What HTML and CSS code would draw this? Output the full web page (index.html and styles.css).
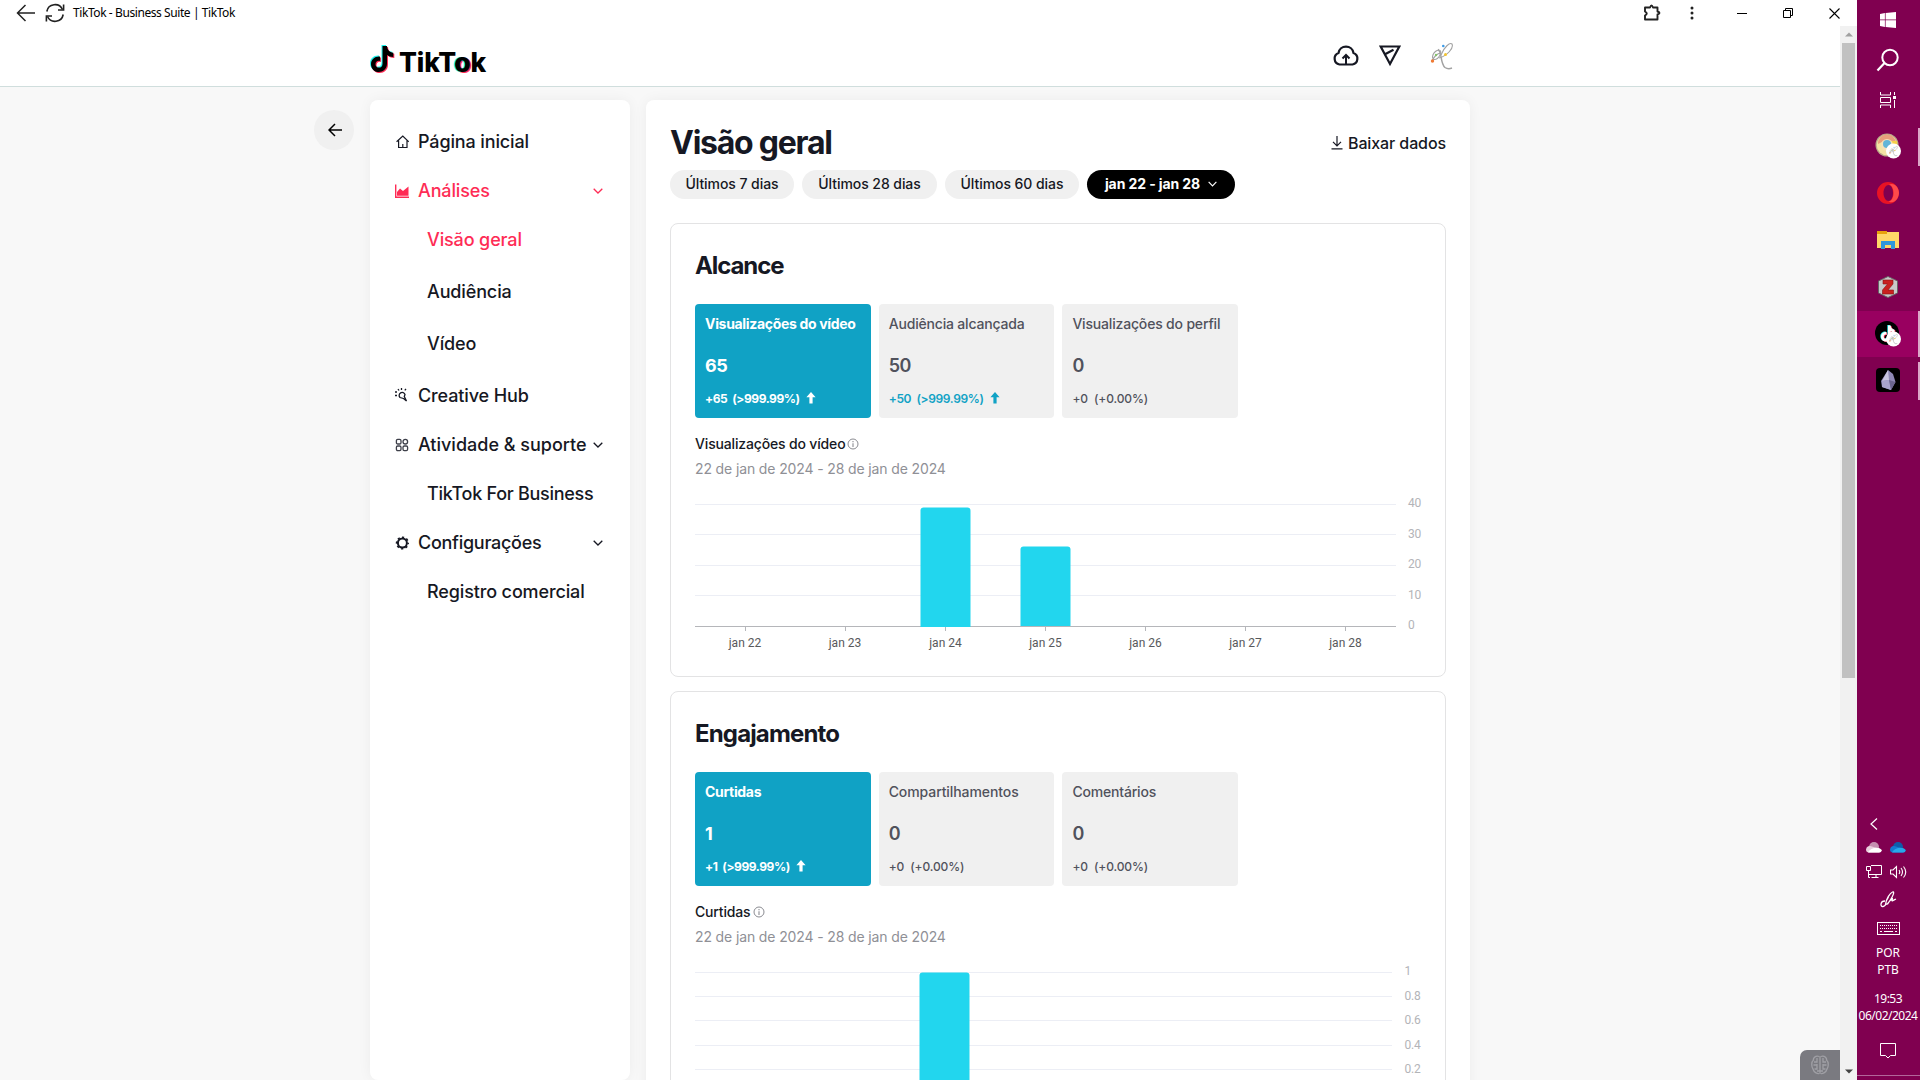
FILE: index.html
```html
<!DOCTYPE html>
<html lang="pt-BR">
<head>
<meta charset="utf-8">
<title>TikTok - Business Suite | TikTok</title>
<link rel="stylesheet" href="styles.css">
</head>
<body>
<svg width="0" height="0" class="defs">
  <defs>
    <symbol id="chev" viewBox="0 0 10 6"><path d="M.7 .7 5 5 9.3 .7" fill="none" stroke="currentColor" stroke-width="1.3"/></symbol>
    <symbol id="up" viewBox="0 0 10 12"><path d="M5 0 9.6 5.2H6.6V11.5H3.4V5.2H.4Z" fill="currentColor"/></symbol>
    <symbol id="info" viewBox="0 0 12 12"><circle cx="6" cy="6" r="5" fill="none" stroke="currentColor" stroke-width="1"/><path d="M6 5.2V9M6 3v1.2" stroke="currentColor" stroke-width="1.1"/></symbol>
    <symbol id="note" viewBox="0 0 24 28"><path d="M12.5 1H17C17.3 5 19.5 7.300 23.300 7.700V12C20.700 12 18.700 11.200 17 10V18.500C17 24 13 27 8.800 27 4 27 1 23.500 1 19.200 1 14.200 5 11 10 11.500V16C7.300 15.300 5.500 17 5.500 19.200 5.500 21.300 7 22.600 8.800 22.600 11 22.600 12.500 21.200 12.500 18.700Z"/></symbol>
    <symbol id="signature" viewBox="0 0 24 28"><g fill="none" stroke="#a2a2a2" stroke-width="1.100"><path d="M8 7.500C12 9 10 21 15 25.500Q18 27.500 22 26" stroke-width="1.500"/><path d="M11 13C14 5 20 0 22 2 24 6 17 14 9 16"/><path d="M9 8C3 9 1 16 4 17.500 9 18 12 10 10 8.500M1.500 20C3 16 7 11 11 11"/></g><circle cx="13.300" cy="4" r="1.300" fill="#3c9be8"/><circle cx="15.500" cy="12.500" r="1.500" fill="#f4c430"/><circle cx="2.500" cy="19" r="1.700" fill="#ef7a35"/><circle cx="6" cy="13" r="1.200" fill="#86c46a"/></symbol>
  </defs>
</svg>
<div class="desktop">
  <div class="window">
    <div class="titlebar">
      <svg class="t-back" width="20" height="18" viewBox="0 0 20 18"><path d="M19 9H2M9.500 1 1.500 9l8 8" fill="none" stroke="#222" stroke-width="1.500"/></svg>
      <svg class="t-reload" width="20" height="20" viewBox="0 0 20 20"><g fill="none" stroke="#222" stroke-width="1.600"><path d="M1.800 8.500A8.300 8.300 0 0 1 17.500 6.500"/><path d="M18.200 11.500A8.300 8.300 0 0 1 2.500 13.500"/><path d="M18.600 1.500V7H13M1.400 18.500V13H7"/></g></svg>
      <span class="t-title">TikTok - Business Suite | TikTok</span>
      <div class="t-right">
        <svg width="18" height="18" viewBox="0 0 18 18"><path d="M2 3.500H7Q8.500 -.5 10 3.500H14.500V7.500Q18.500 9 14.500 10.500V15.500H2V11.500Q5.500 9.500 2 7.500Z" fill="none" stroke="#222" stroke-width="1.900" stroke-linejoin="round"/></svg>
        <svg width="4" height="14" viewBox="0 0 4 14"><g fill="#222"><circle cx="2" cy="2" r="1.500"/><circle cx="2" cy="7" r="1.500"/><circle cx="2" cy="12" r="1.500"/></g></svg>
        <svg width="10" height="10" viewBox="0 0 10 10"><path d="M0 5.500H10" stroke="#000"/></svg>
        <svg width="10" height="10" viewBox="0 0 10 10"><path d="M.5 2.500H7.500V9.500H.5ZM2.500 2.500V.5H9.500V7.500H7.500" fill="none" stroke="#000"/></svg>
        <svg width="11" height="11" viewBox="0 0 11 11"><path d="M.5 .5 10.500 10.500M10.500 .5 .5 10.500" stroke="#000" stroke-width="1.100"/></svg>
      </div>
    </div>
    <div class="viewport">
      <div class="page">
        <header class="header">
          <div class="logo">
            <svg width="26" height="30" viewBox="0 0 26 30"><use href="#note" width="24" height="28" x="0" y="0" fill="#25f4ee"/><use href="#note" width="24" height="28" x="2" y="2" fill="#fe2c55"/><use href="#note" width="24" height="28" x="1" y="1" fill="#000"/></svg>
            <span class="wordmark">TikT<span class="o">o</span>k</span>
          </div>
          <div class="header-icons">
            <svg width="28" height="24" viewBox="0 0 28 24"><path d="M7.500 20.500A6 6 0 0 1 6.500 9 7.600 7.600 0 0 1 21.500 9 6 6 0 0 1 20.500 20.500Z" fill="none" stroke="#161823" stroke-width="2.200"/><path d="M14 20V12M10.500 14.500 14 11l3.500 3.500" fill="none" stroke="#161823" stroke-width="2"/></svg>
            <svg width="22" height="24" viewBox="0 0 22 24"><path d="M1.700 2.500H20.300L11 20ZM6.500 10 14.500 5.800" fill="none" stroke="#161823" stroke-width="2.200"/></svg>
            <svg width="24" height="28"><use href="#signature"/></svg>
          </div>
        </header>
        <div class="content">
          <button class="back"><svg width="14" height="14" viewBox="0 0 14 14"><path d="M14 7H1.500M7 1 1 7l6 6" fill="none" stroke="#000" stroke-width="1.500"/></svg></button>
          <nav class="sidebar">
            <a class="item"><svg width="14" height="14" viewBox="0 0 14 14"><path d="M1.600 6.800 7.800 1l6 5.800M3.600 5.500V12.500H12V5.500M7.800 9v3.500" fill="none" stroke="#161823" stroke-width="1.200"/></svg><span>Página inicial</span></a>
            <a class="item active"><svg width="14" height="14" viewBox="0 0 14 14"><path d="M.7 .5V13.200H14" fill="none" stroke="currentColor" stroke-width="1.400"/><path d="M2 11.700V8L5 4.500 8 7l5.500-4.500V11.700Z" fill="currentColor"/></svg><span>Análises</span><svg class="chev" width="10" height="6"><use href="#chev"/></svg></a>
            <a class="sub active"><span>Visão geral</span></a>
            <a class="sub tall"><span>Audiência</span></a>
            <a class="sub tall"><span>Vídeo</span></a>
            <a class="item creative"><svg width="14" height="14" viewBox="0 0 14 14"><g fill="none" stroke="#161823" stroke-width="1.300"><path d="M5 9.500A3 3 0 1 1 10 6.500L9.300 8.500 11.500 13 8.500 10.500Z"/><path d="M0 4h2M0 7.500h2M3 1l1 1.500M6.500 0v2M11 .8l-1.200 1.500"/></g></svg><span>Creative Hub</span></a>
            <a class="item"><svg width="14" height="14" viewBox="0 0 14 14"><g fill="none" stroke="#3d3f49" stroke-width="1.300"><rect x="1.400" y="1.400" width="4.600" height="4.600" rx="1.300"/><rect x="8" y="1.400" width="4.600" height="4.600" rx="2.300"/><rect x="1.400" y="8" width="4.600" height="4.600" rx="1.300"/><rect x="8" y="8" width="4.600" height="4.600" rx="1.300"/></g></svg><span class="wide">Atividade &amp; suporte</span><svg class="chev" width="10" height="6"><use href="#chev"/></svg></a>
            <a class="sub"><span class="tight">TikTok For Business</span></a>
            <a class="item"><svg width="14" height="14" viewBox="0 0 14 14"><circle cx="7.400" cy="7" r="4.500" fill="none" stroke="#161823" stroke-width="2"/><circle cx="7.400" cy="7" r="5.800" fill="none" stroke="#161823" stroke-width="1.600" stroke-dasharray="2.200 2.355" stroke-dashoffset="1.100"/></svg><span class="conf">Configurações</span><svg class="chev" width="10" height="6"><use href="#chev"/></svg></a>
            <a class="sub"><span>Registro comercial</span></a>
          </nav>
          <main class="main">
            <div class="main-head">
              <h1>Visão geral</h1>
              <a class="download"><svg width="12" height="14" viewBox="0 0 12 14"><path d="M6 0V9.500M2 5.800 6 9.800l4-4M.5 12.800H11.500" fill="none" stroke="#161823" stroke-width="1.200"/></svg><span>Baixar dados</span></a>
            </div>
            <div class="pills">
              <span class="pill p1">Últimos 7 dias</span><span class="pill p2">Últimos 28 dias</span><span class="pill p3">Últimos 60 dias</span><span class="pill on p4">jan 22 - jan 28 <svg width="9" height="6"><use href="#chev"/></svg></span>
            </div>
            <section class="card">
              <h2 class="reach">Alcance</h2>
              <div class="metrics">
                <div class="metric on"><b>Visualizações do vídeo</b><strong>65</strong><small>+65 &nbsp;(&gt;999.99%)<svg width="10" height="12"><use href="#up"/></svg></small></div>
                <div class="metric up"><b>Audiência alcançada</b><strong>50</strong><small>+50 &nbsp;(&gt;999.99%)<svg width="10" height="12"><use href="#up"/></svg></small></div>
                <div class="metric"><b>Visualizações do perfil</b><strong>0</strong><small>+0 &nbsp;(+0.00%)</small></div>
              </div>
              <h3>Visualizações do vídeo<svg width="12" height="12"><use href="#info"/></svg></h3>
              <p class="dates">22 de jan de 2024 - 28 de jan de 2024</p>
              <svg class="chart" width="750" height="170" viewBox="0 0 750 170">
                <g class="grid"><path d="M0 19.500H701M0 49.500H701M0 80.500H701M0 110.500H701"/></g>
                <path class="axis" d="M0 141.500H701"/>
                <path class="bar" d="M225.500 142V25.500a3 3 0 0 1 3-3h44a3 3 0 0 1 3 3V142Z"/>
                <path class="bar" d="M325.500 141V64.500a3 3 0 0 1 3-3h44a3 3 0 0 1 3 3V141Z"/>
                <path class="axis" d="M50.500 142v4M150.500 142v4M250.500 142v4M350.500 142v4M450.500 142v4M550.500 142v4M650.500 142v4"/>
                <g class="xl"><text x="50" y="162">jan 22</text><text x="150" y="162">jan 23</text><text x="250.500" y="162">jan 24</text><text x="350.500" y="162">jan 25</text><text x="450.500" y="162">jan 26</text><text x="550.500" y="162">jan 27</text><text x="650.500" y="162">jan 28</text></g>
                <g class="yl"><text x="713" y="22">40</text><text x="713" y="53">30</text><text x="713" y="83">20</text><text x="713" y="114">10</text><text x="713" y="144">0</text></g>
              </svg>
            </section>
            <section class="card">
              <h2>Engajamento</h2>
              <div class="metrics">
                <div class="metric on"><b>Curtidas</b><strong>1</strong><small>+1 &nbsp;(&gt;999.99%)<svg width="10" height="12"><use href="#up"/></svg></small></div>
                <div class="metric"><b class="shares">Compartilhamentos</b><strong>0</strong><small>+0 &nbsp;(+0.00%)</small></div>
                <div class="metric"><b>Comentários</b><strong>0</strong><small>+0 &nbsp;(+0.00%)</small></div>
              </div>
              <h3>Curtidas<svg width="12" height="12"><use href="#info"/></svg></h3>
              <p class="dates">22 de jan de 2024 - 28 de jan de 2024</p>
              <svg class="chart" width="750" height="170" viewBox="0 0 750 170">
                <g class="grid"><path d="M0 19.500H697M0 43.500H697M0 67.500H697M0 92.500H697M0 116.500H697"/></g>
                <path class="bar" d="M224.500 141V22.500a3 3 0 0 1 3-3h44a3 3 0 0 1 3 3V141Z"/>
                <path class="axis" d="M0 141.500H697"/>
                <g class="yl"><text x="709.500" y="22">1</text><text x="709.500" y="47">0.8</text><text x="709.500" y="71">0.6</text><text x="709.500" y="96">0.4</text><text x="709.500" y="120">0.2</text></g>
              </svg>
            </section>
          </main>
        </div>
        <div class="brain"><svg width="18" height="20" viewBox="0 0 18 20"><g fill="none" stroke="#a0a0a5" stroke-width="1.300"><path d="M9 1V19M8 1.500C4 0 2 4 2.500 5 0 7 .5 12 2 14 3 18 7 19 8 18.500M10 1.500c4-1.500 6 2.500 5.500 3.500 2.500 2 2 7 .5 9-1 4-5 5-6 4.500"/><path d="M6 3v4H3M6 10H2.500M6 9v5H3.500M12 3v4h3M12 10h3.500M12 9v5h2.500M6 16h6"/></g></svg></div>
      </div>
      <div class="scroll"><svg width="8" height="5" viewBox="0 0 8 5"><path d="M0 4.500 4 .5 8 4.500Z" fill="#a0a0a0"/></svg><i class="thumb"></i><svg class="down" width="8" height="5" viewBox="0 0 8 5"><path d="M0 .5H8L4 4.500Z" fill="#444"/></svg></div>
    </div>
  </div>
  <aside class="taskbar">
    <div class="tb h40"><svg width="16" height="16" viewBox="0 0 16 16"><path d="M0 2 4.900 1.100V7.500H0ZM5.600 1 16 0V7.500H5.600ZM0 8.300H4.900V14.900L0 14ZM5.600 8.300H16V16L5.600 15Z" fill="#fff"/></svg></div>
    <div class="tb h40"><svg width="24" height="24" viewBox="0 0 24 24"><circle cx="14" cy="9.500" r="7.700" fill="none" stroke="#fff" stroke-width="2"/><path d="M8.500 15 1.500 22.500" stroke="#fff" stroke-width="2.200"/></svg></div>
    <div class="tb h40"><svg width="16" height="16" viewBox="0 0 16 16"><path d="M.5 0V3H10.500V0M.5 16V13H10.500V16M.5 5.500H10.500V10.500H.5ZM14.500 0V3M14.500 8V16" fill="none" stroke="#fff"/><rect x="13" y="4" width="3" height="3" fill="#fff"/></svg></div>
    <div class="tb run chrome"><svg width="26" height="26" viewBox="0 0 26 26"><circle cx="12" cy="12" r="11.500" fill="#b9a98a"/><circle cx="12" cy="12" r="10.300" fill="#f4e3a4"/><path d="M3 11a9 9 0 0 1 18-1l-5 1-5-4Z" fill="#e8a07c"/><path d="M15 8h7q1 4-2 8l-5-3Z" fill="#f6d04a"/><circle cx="12" cy="12" r="6" fill="#f6e0b8"/><circle cx="12" cy="11" r="4" fill="#62b5d8"/><circle cx="18.500" cy="18" r="7.500" fill="#fff"/><use href="#signature" x="14" y="12" width="9" height="12"/></svg></div>
    <div class="tb"><svg width="24" height="24" viewBox="0 0 24 24"><path fill="#e81224" fill-rule="evenodd" d="M12 1a11 11 0 1 0 0 22 11 11 0 0 0 0-22ZM12.500 4C15 4 17 7.500 17 12s-2 8-4.500 8S7.500 16.500 7.500 12 10 4 12.500 4Z"/><path d="M12.500 20.500C16 20 17.500 16 17.500 12S16 4 12.500 3.500C20 1 23 8 23 12S19 24 12.500 20.500Z" fill="#ff4b4b"/></svg></div>
    <div class="tb"><svg width="22" height="18" viewBox="0 0 22 18"><path d="M0 0H10V1H22V17H0Z" fill="#ffd868"/><path d="M0 0H10V3H0Z" fill="#e8a20c"/><path d="M4 18V10H18V18H14V14H8V18Z" fill="#2f97dc"/></svg></div>
    <div class="tb"><svg width="20" height="22" viewBox="0 0 20 22"><path d="M10 .5 19.500 5V17L10 21.500 .5 17V5Z" fill="#c9c9c9" stroke="#666"/><path d="M5 4H15V8L10 14H15.500V18H4.500V14L9.500 8H5Z" fill="#c9201f" stroke="#8c1010" stroke-width=".6"/></svg></div>
    <div class="tb run current"><svg width="26" height="26" viewBox="0 0 26 26"><circle cx="12" cy="12" r="12" fill="#000"/><use href="#note" x="4.500" y="3.500" width="15" height="17" fill="#25f4ee"/><use href="#note" x="6" y="4.500" width="15" height="17" fill="#fe2c55"/><use href="#note" x="5.200" y="4" width="15" height="17" fill="#fff"/><circle cx="18.500" cy="18" r="7.500" fill="#fff"/><use href="#signature" x="14" y="12" width="9" height="12"/></svg></div>
    <div class="tb run last"><svg width="24" height="24" viewBox="0 0 24 24"><rect width="24" height="24" rx="4" fill="#000"/><path d="M12 2 17 6 19.500 14 15 22 6 19 5 13Z" fill="#8f89b5"/><path d="M12 2 13 12 6 13Z" fill="#c9c5e0"/><path d="M6 13 13 12 15 22 6 19Z" fill="#a9a4cb"/><path d="M13 12 19.500 14 15 22Z" fill="#6b658f"/></svg></div>
    <div class="tray">
      <svg class="more" width="8" height="12" viewBox="0 0 8 12"><path d="M7 .5 1 6l6 5.500" fill="none" stroke="#fff" stroke-width="1.200"/></svg>
      <div class="row r1"><svg width="16" height="11" viewBox="0 0 16 11"><circle cx="8" cy="5" r="5" fill="#c58fb0"/><path d="M0 7.500A4 4 0 0 1 6 4.500L16 8Q15 10.500 13 10.500H3Q0 10.500 0 7.500Z" fill="#e8cfdd"/><path d="M2 10.500C4 6 13 4 15.500 8Q15.500 10.500 13 10.500Z" fill="#fff"/></svg><svg width="16" height="11" viewBox="0 0 16 11"><circle cx="8" cy="5" r="5" fill="#0d5cab"/><path d="M0 7.500A4 4 0 0 1 6 4.500L16 8Q15 10.500 13 10.500H3Q0 10.500 0 7.500Z" fill="#1479d2"/><path d="M2 10.500C4 6 13 4 15.500 8Q15.500 10.500 13 10.500Z" fill="#28a8ea"/></svg></div>
      <div class="row r2"><svg width="16" height="14" viewBox="0 0 16 14"><path d="M5 .5H15.500V9.500H3M10 9.500V12M5.500 12.500H12.500M.5 1.500H4.500V5.500H.5ZM2.500 5.500V12.500H4" fill="none" stroke="#fff"/></svg><svg width="18" height="14" viewBox="0 0 18 14"><path d="M.5 5H3L6.500 1.500V12.500L3 9H.5ZM9 5Q10.500 7 9 9M11 3Q14 7 11 11M13.500 1.500Q18 7 13.500 12.500" fill="none" stroke="#fff" stroke-width="1.100"/></svg></div>
      <svg class="pen" width="17" height="17" viewBox="0 0 17 17"><path d="M5 10C0 10 0 16 3 15.500S6 11 6 11M5.500 13.500C6 8 10 2 12.500 1S13.500 5 7.500 13ZM8.500 6 6.500 9.500M10 10C12 6 13 7 12 9S14 9 16 8" fill="none" stroke="#fff" stroke-width="1.300"/></svg>
      <svg class="kbd" width="23" height="13" viewBox="0 0 23 13"><rect x=".5" y=".5" width="22" height="12" fill="none" stroke="#fff"/><path d="M3 3.500H20M3 6.500H20" stroke="#fff" stroke-dasharray="1 1"/><path d="M3 9.500H5M7 9.500H16M18 9.500H20" stroke="#fff"/></svg>
      <div class="lang">POR<br>PTB</div>
      <div class="clock">19:53<br>06/02/2024</div>
      <svg class="notif" width="16" height="16" viewBox="0 0 16 16"><path d="M.5 .5H15.500V12.500H10.500L8 15 5.500 12.500H.5Z" fill="none" stroke="#fff"/></svg>
    </div>
    <div class="peek"></div>
  </aside>
</div>
</body>
</html>
```
FILE: styles.css
```css
* { box-sizing: border-box; }
body { margin: 0; background: #fff; color: #161823; font-family: Inter, "Liberation Sans", sans-serif; }
svg { display: block; flex: none; }
.defs { position: absolute; }
h1, h2, h3, p { margin: 0; }
.desktop { display: flex; width: 1920px; height: 1080px; overflow: hidden; }
.window { width: 1857px; display: flex; flex-direction: column; background: #fff; }

.titlebar { height: 26px; display: flex; align-items: center; padding-left: 16px; flex: none; }
.t-back { margin-right: 9px; }
.t-title { margin-left: 8px; font: 12px/16px "Noto Sans", sans-serif; letter-spacing: -.42px; color: #000; }
.t-right { margin-left: auto; display: flex; align-items: center; padding-right: 17px; }
.t-right svg:nth-child(1) { margin-right: 29px; }
.t-right svg:nth-child(2) { margin-right: 43px; }
.t-right svg:nth-child(3) { margin-right: 36px; }
.t-right svg:nth-child(4) { margin-right: 36px; }

.viewport { flex: 1; display: flex; min-height: 0; }
.page { width: 1840px; display: flex; flex-direction: column; background: #f8f8f8; position: relative; overflow: hidden; }
.header { height: 61px; flex: none; background: #fff; border-bottom: 1px solid #d0dedd; padding: 0 386px 0 369px; display: flex; justify-content: space-between; align-items: flex-start; }
.logo { display: flex; padding-top: 18px; }
.wordmark { margin: 1px 0 0 4px; font: 850 26.5px/34px Inter, sans-serif; letter-spacing: -.1px; color: #000; }
.wordmark .o { text-shadow: -1.500px -.5px 0 #25f4ee, 1.500px .5px 0 #fe2c55; }
.header-icons { display: flex; align-items: center; padding-top: 16px; }
.header-icons svg:nth-child(2) { margin: 0 29px 0 19px; }

.content { flex: 1; min-height: 0; display: flex; align-items: flex-start; padding: 13px 0 0 314px; }
.back { margin: 10px 16px 0 0; width: 40px; height: 40px; border: 0; border-radius: 50%; background: #f0f0f0; display: flex; align-items: center; justify-content: center; padding: 0 0 0 1px; }
.sidebar { width: 260px; height: 980px; margin-right: 16px; background: #fff; border-radius: 8px; box-shadow: 0 0 14px rgba(0,0,0,.05); padding: 17px 24px 0 25px; font-size: 18px; font-weight: 450; letter-spacing: -.13px; }
.sidebar a { display: flex; align-items: center; height: 49px; white-space: nowrap; }
.sidebar .item svg:first-child { margin-right: 9px; }
.sidebar .sub { padding-left: 32px; }
.sidebar .tall { height: 52px; padding-top: 2px; }
.sidebar .creative { height: 52px; padding-top: 2px; }
.sidebar .active { color: #fe2c55; }
.sidebar .wide { letter-spacing: 0; }
.sidebar .tight { letter-spacing: -.28px; }
.sidebar .conf { letter-spacing: -.27px; }
.chev { margin-left: auto; margin-right: 3px; }

.main { width: 824px; height: 1200px; background: #fff; border-radius: 8px; box-shadow: 0 0 14px rgba(0,0,0,.05); padding: 23px 24px; }
.main-head { display: flex; justify-content: space-between; height: 40px; align-items: center; }
h1 { font-size: 32px; font-weight: 650; line-height: 40px; letter-spacing: -1.25px; }
.download { display: flex; align-items: center; font-size: 16px; font-weight: 450; letter-spacing: -.1px; }
.download svg { margin-right: 5px; }
.pills { display: flex; margin-top: 7px; height: 29px; font-size: 14px; font-weight: 500; letter-spacing: -.06px; }
.pill { height: 29px; border-radius: 15px; background: #f0f0f0; display: flex; align-items: center; justify-content: center; white-space: nowrap; padding-bottom: 2px; }
.p1 { width: 124px; margin-right: 8px; }
.p2 { width: 135px; margin-right: 8px; }
.p3 { width: 134px; margin-right: 8px; }
.p4 { width: 148px; }
.pill.on { background: #000; color: #fff; font-weight: 700; gap: 8px; letter-spacing: -.1px; }
.card { margin-top: 24px; height: 454px; border: 1px solid #e3e3e4; border-radius: 8px; padding: 26px 24px 0; }
.card + .card { margin-top: 14px; }
h2 { font-size: 24px; font-weight: 650; line-height: 32px; letter-spacing: -.85px; }
h2.reach { letter-spacing: -1.1px; }
.metrics { display: flex; gap: 8px; margin-top: 22px; }
.metric { width: 175.700px; height: 114px; border-radius: 4px; background: #f0f0f0; color: #50525c; padding: 10px; display: flex; flex-direction: column; white-space: nowrap; }
.metric b { font-size: 14px; line-height: 20px; font-weight: 500; letter-spacing: -.18px; }
.metric b.shares { letter-spacing: -.09px; }
.metric strong { font-size: 18px; line-height: 24px; font-weight: 600; margin-top: 20px; letter-spacing: -.4px; }
.metric small { font-size: 12px; line-height: 16px; font-weight: 500; margin-top: 13px; display: flex; letter-spacing: -.13px; }
.metric small svg { margin: 1px 0 0 6px; }
.metric.up small { color: #10a2c5; font-weight: 600; letter-spacing: -.37px; }
.metric.on { background: #10a2c5; color: #fff; }
.metric.on b, .metric.on strong, .metric.on small { font-weight: 700; }
.metric.on b { letter-spacing: -.32px; }
.metric.on small { letter-spacing: -.43px; }
h3 { display: flex; align-items: center; margin-top: 16px; font-size: 14px; line-height: 20px; font-weight: 500; letter-spacing: -.16px; }
h3 svg { margin-left: 2px; color: #8a8b91; }
.dates { margin-top: 5px; font-size: 14px; line-height: 20px; color: #8f9096; letter-spacing: -.13px; }
.chart { margin-top: 6px; }
.grid path { stroke: #eceef5; fill: none; }
.axis { stroke: #b5b6ba; fill: none; }
.bar { fill: #22d6ee; }
.xl text { font: 12px Roboto, sans-serif; fill: #58595c; text-anchor: middle; }
.yl text { font: 12px Roboto, sans-serif; fill: #b3b4b8; letter-spacing: -.2px; }
.brain { position: absolute; right: 0; bottom: 0; width: 40px; height: 30px; border-radius: 7px 0 0 0; background: #7a7a80; display: flex; align-items: center; justify-content: center; }

.scroll { width: 17px; background: #f1f1f1; display: flex; flex-direction: column; align-items: center; padding: 6px 0; }
.thumb { width: 13px; height: 635px; margin-top: 6px; background: #c1c1c1; }
.down { margin-top: auto; }

.taskbar { width: 63px; background: #800050; color: #fff; display: flex; flex-direction: column; font-family: "Noto Sans", sans-serif; }
.tb { height: 47px; display: flex; align-items: center; justify-content: center; padding: 0 1px 1px 0; flex: none; }
.tb.h40 { height: 40px; padding-bottom: 0; }
.tb.chrome { margin-top: 3px; }
.tb.run { background: linear-gradient(#dba6c8, #dba6c8) right center / 2px 38px no-repeat; }
.tb.current { height: 46px; padding-bottom: 0; background: linear-gradient(#dba6c8, #dba6c8) right center / 2px 46px no-repeat #990060; }
.tray { margin-top: auto; display: flex; flex-direction: column; align-items: center; height: 257px; padding-right: 1px; font-size: 12px; line-height: 17px; text-align: center; }
.more { margin-right: 28px; }
.row { display: flex; gap: 8px; margin-right: 4px; }
.r1 { margin-top: 12px; }
.r2 { margin-top: 12px; margin-right: 2px; }
.pen { margin-top: 12px; }
.kbd { margin-top: 14px; }
.lang { margin-top: 9px; }
.clock { margin-top: 12px; letter-spacing: -.5px; }
.notif { margin-top: 19px; }
.peek { height: 5px; border-top: 1px solid #b3669a; }
```
